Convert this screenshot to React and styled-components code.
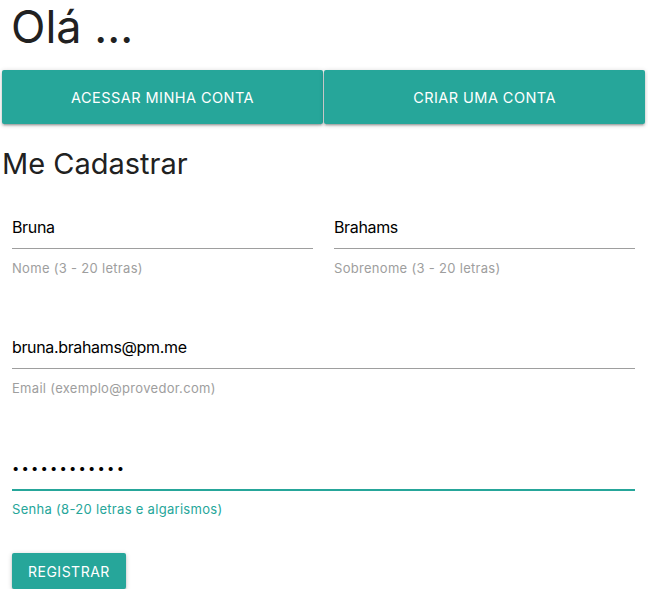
import React from "react";
import styled, { createGlobalStyle } from "styled-components";

const GlobalStyle = createGlobalStyle`
  html, body { margin: 0; padding: 0; background: #fff; }
  body { font-family: Inter, "Noto Sans", sans-serif; color: rgba(0,0,0,0.87); }
  * { box-sizing: border-box; }
`;

const TEAL = "#26a69a";

const Page = styled.div`
  width: 648px;
  display: flex;
  flex-direction: column;
`;

const Title = styled.h1`
  margin: 4px 0 0 0;
  padding-left: 11px;
  font-size: 45px;
  line-height: 45px;
  font-weight: 400;
  color: #212121;
`;

const TabRow = styled.div`
  display: flex;
  gap: 1px;
  padding: 0 3px 0 2px;
  margin-top: 21px;
`;

const TabButton = styled.button`
  flex: 1;
  height: 54px;
  border: none;
  border-radius: 2px;
  background: ${TEAL};
  color: #fff;
  font-family: inherit;
  font-size: 14.5px;
  letter-spacing: 0.45px;
  text-transform: uppercase;
  box-shadow: 0 2px 2px 0 rgba(0,0,0,0.14), 0 3px 1px -2px rgba(0,0,0,0.12), 0 1px 5px 0 rgba(0,0,0,0.2);
  cursor: pointer;
`;

const SectionTitle = styled.h2`
  margin: 22px 0 0 0;
  padding-left: 2px;
  font-size: 29px;
  line-height: 36px;
  font-weight: 400;
  color: #212121;
`;

const Form = styled.form`
  display: flex;
  flex-direction: column;
  padding: 0 13px 0 12px;
  margin-top: 24px;
`;

const Row = styled.div`
  display: grid;
  grid-template-columns: ${(p) => (p.$cols === 2 ? "1fr 1fr" : "1fr")};
  column-gap: 21px;
  margin-top: ${(p) => p.$gap || 0}px;
`;

const Field = styled.div`
  display: flex;
  flex-direction: column;
`;

const Input = styled.input`
  height: 43px;
  width: 100%;
  border: none;
  border-bottom: 1px solid ${(p) => (p.$active ? TEAL : "#9e9e9e")};
  box-shadow: ${(p) => (p.$active ? `0 1px 0 0 ${TEAL}` : "none")};
  outline: none;
  padding: 0;
  font-family: inherit;
  font-size: ${(p) => (p.type === "password" ? "13px" : "16px")};
  letter-spacing: ${(p) => (p.type === "password" ? "2.2px" : "-0.35px")};
  color: #000;
  background: transparent;
`;

const Helper = styled.span`
  margin-top: 10px;
  font-size: 13px;
  line-height: 18px;
  letter-spacing: 0.3px;
  color: ${(p) => (p.$active ? TEAL : "#9e9e9e")};
`;

const SubmitButton = styled.button`
  align-self: flex-start;
  margin-top: 35px;
  height: 36px;
  padding: 0 16px;
  border: none;
  border-radius: 2px;
  background: ${TEAL};
  color: #fff;
  font-family: inherit;
  font-size: 14px;
  letter-spacing: 0.5px;
  text-transform: uppercase;
  box-shadow: 0 2px 2px 0 rgba(0,0,0,0.14), 0 3px 1px -2px rgba(0,0,0,0.12), 0 1px 5px 0 rgba(0,0,0,0.2);
  cursor: pointer;
`;

export default function App() {
  return (
    <Page>
      <GlobalStyle />
      <Title>Olá ...</Title>
      <TabRow>
        <TabButton type="button">Acessar minha conta</TabButton>
        <TabButton type="button">Criar uma conta</TabButton>
      </TabRow>
      <SectionTitle>Me Cadastrar</SectionTitle>
      <Form onSubmit={(e) => e.preventDefault()}>
        <Row $cols={2}>
          <Field>
            <Input type="text" defaultValue="Bruna" />
            <Helper>Nome (3 - 20 letras)</Helper>
          </Field>
          <Field>
            <Input type="text" defaultValue="Brahams" />
            <Helper>Sobrenome (3 - 20 letras)</Helper>
          </Field>
        </Row>
        <Row $gap={49}>
          <Field>
            <Input type="email" defaultValue="bruna.brahams@pm.me" />
            <Helper>Email (exemplo@provedor.com)</Helper>
          </Field>
        </Row>
        <Row $gap={50}>
          <Field>
            <Input type="password" defaultValue="bruna1234567" $active />
            <Helper $active>Senha (8-20 letras e algarismos)</Helper>
          </Field>
        </Row>
        <SubmitButton type="submit">Registrar</SubmitButton>
      </Form>
    </Page>
  );
}
